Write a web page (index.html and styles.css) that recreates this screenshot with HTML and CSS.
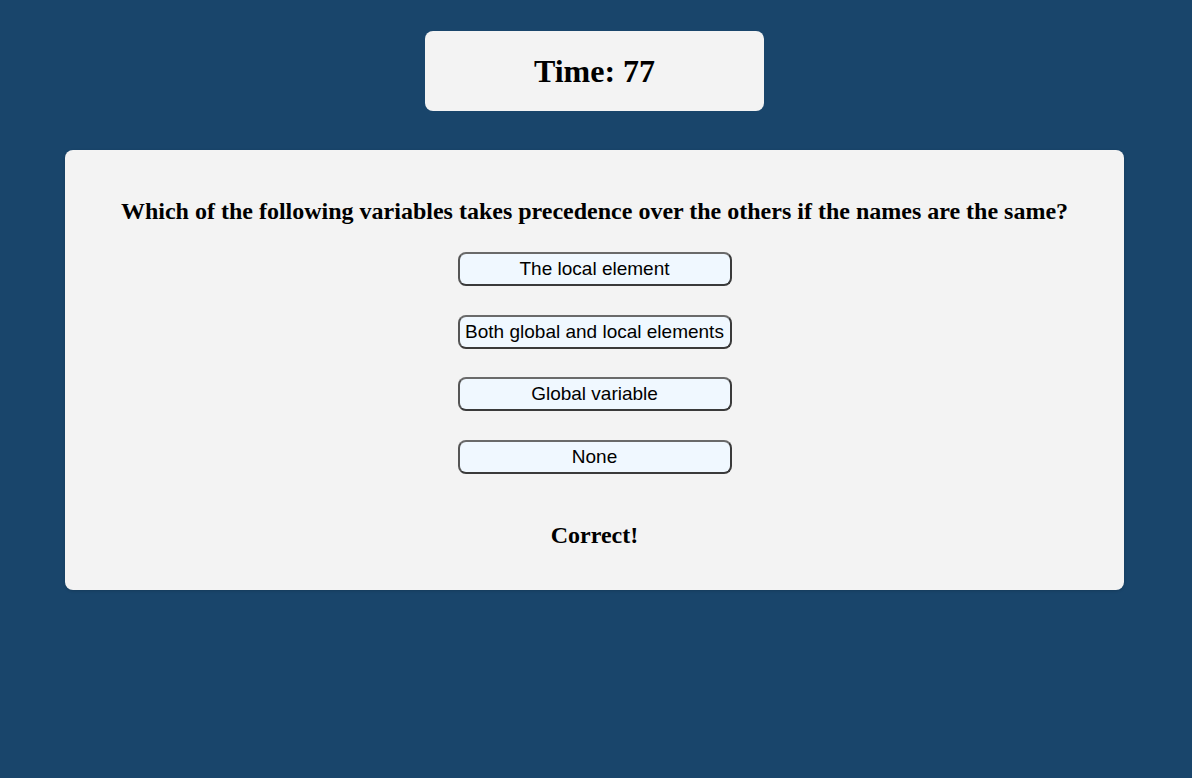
FILE: index.html
```html
<!DOCTYPE html>
<html>
<head>
<meta charset="utf-8">
<link rel="stylesheet" href="styles.css">
</head>
<body>
<div class="page">
  <div class="timer"><h1 class="timer-text">Time: 77</h1></div>
  <div class="card">
    <h2 class="question">Which of the following variables takes precedence over the others if the names are the same?</h2>
    <div class="options">
      <button class="option">The local element</button>
      <button class="option">Both global and local elements</button>
      <button class="option">Global variable</button>
      <button class="option">None</button>
    </div>
    <h2 class="result">Correct!</h2>
  </div>
</div>
</body>
</html>
```
FILE: styles.css
```css
html, body {
  margin: 0;
  padding: 0;
  background: #19456b;
  height: 100%;
}
body {
  font-family: "Liberation Serif", "Times New Roman", serif;
  color: #000;
}
.page {
  display: flex;
  flex-direction: column;
  align-items: center;
  padding-top: 31px;
  padding-right: 3px;
}
.timer {
  width: 339px;
  height: 80px;
  box-sizing: border-box;
  background: #f3f3f3;
  border-radius: 8px;
  display: flex;
  justify-content: center;
  padding-top: 22px;
}
.timer-text {
  margin: 0;
  font-size: 32px;
  font-weight: bold;
  line-height: 37px;
}
.card {
  margin-top: 39px;
  width: 1059px;
  height: 440px;
  box-sizing: border-box;
  background: #f3f3f3;
  border-radius: 8px;
  box-shadow: 0 1px 3px rgba(0,0,0,0.15);
  display: flex;
  flex-direction: column;
  align-items: center;
  padding-top: 47px;
}
.question {
  margin: 0;
  font-size: 24px;
  font-weight: bold;
  line-height: 28px;
  text-align: center;
}
.options {
  margin-top: 27px;
  display: flex;
  flex-direction: column;
  gap: 28.5px;
  align-items: center;
}
.option {
  width: 274px;
  height: 34px;
  box-sizing: border-box;
  background: #f0f8ff;
  border: 2px solid #3a3a3a;
  border-top-color: #6a6a6a;
  border-left-color: #555;
  border-radius: 8px;
  font-family: "Liberation Sans", Arial, sans-serif;
  font-size: 19px;
  color: #000;
  padding: 0 4px;
  line-height: 22px;
  white-space: nowrap;
}
.result {
  margin: 47px 0 0;
  font-size: 24px;
  font-weight: bold;
  line-height: 28px;
}
```
